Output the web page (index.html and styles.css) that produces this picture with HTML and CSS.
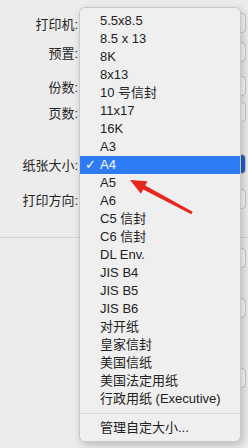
FILE: index.html
```html
<!DOCTYPE html>
<html>
  <head>
    <title>打印</title>
    <link rel="stylesheet" href="styles.css">
  </head>
  <body>
    <div class="dialog">
      <div class="row r1"><span class="label">打印机:</span><div class="control"></div></div>
      <div class="row r2"><span class="label">预置:</span><div class="control"></div></div>
      <div class="row r3"><span class="label">份数:</span><div class="control field"></div></div>
      <div class="row r4"><span class="label">页数:</span><div class="control field"></div></div>
      <div class="row r5"><span class="label">纸张大小:</span><div class="control popup"></div></div>
      <div class="row r6"><span class="label">打印方向:</span><div class="control field"></div></div>
      <div class="rule"></div>
      <div class="row r7"><span class="label"></span><div class="control field"></div></div>
      <div class="row r8"><span class="label"></span><div class="control field"></div></div>
      <div class="row r9"><span class="label"></span><div class="control field"></div></div>
    </div>

    <div class="menu">
      <div class="item"><span class="check"></span>5.5x8.5</div>
      <div class="item"><span class="check"></span>8.5 x 13</div>
      <div class="item"><span class="check"></span>8K</div>
      <div class="item"><span class="check"></span>8x13</div>
      <div class="item"><span class="check"></span>10 号信封</div>
      <div class="item"><span class="check"></span>11x17</div>
      <div class="item"><span class="check"></span>16K</div>
      <div class="item"><span class="check"></span>A3</div>
      <div class="item selected"><span class="check">✓</span>A4</div>
      <div class="item"><span class="check"></span>A5</div>
      <div class="item"><span class="check"></span>A6</div>
      <div class="item"><span class="check"></span>C5 信封</div>
      <div class="item"><span class="check"></span>C6 信封</div>
      <div class="item"><span class="check"></span>DL Env.</div>
      <div class="item"><span class="check"></span>JIS B4</div>
      <div class="item"><span class="check"></span>JIS B5</div>
      <div class="item"><span class="check"></span>JIS B6</div>
      <div class="item"><span class="check"></span>对开纸</div>
      <div class="item"><span class="check"></span>皇家信封</div>
      <div class="item"><span class="check"></span>美国信纸</div>
      <div class="item"><span class="check"></span>美国法定用纸</div>
      <div class="item"><span class="check"></span>行政用纸 (Executive)</div>
      <div class="separator"></div>
      <div class="item"><span class="check"></span>管理自定大小...</div>
    </div>

    <svg class="arrow" width="248" height="448" viewBox="0 0 248 448">
      <polygon points="130,180 147.5,181.3 145.2,185.6 192.7,211.7 191.3,214.3 143.2,189.4 140.9,193.7" fill="#e6261f"/>
    </svg>
  </body>
</html>
```

FILE: styles.css
```css
body {
  margin: 0;
  width: 248px;
  height: 448px;
  overflow: hidden;
  background-color: #ececec;
  font-family: "Liberation Sans", "Noto Sans CJK SC", sans-serif;
  font-size: 13px;
  color: #262626;
  position: relative;
}

.dialog {
  display: flex;
  flex-direction: column;
  padding-top: 13px;
}

.row {
  display: flex;
  align-items: center;
  height: 20px;
}

.row.r2 { margin-top: 9px; }
.row.r3 { margin-top: 14px; }
.row.r4 { margin-top: 6px; }
.row.r5 { margin-top: 32px; }
.row.r6 { margin-top: 15px; }
.row.r7 { margin-top: 10px; }
.row.r8 { margin-top: 30px; }
.row.r9 { margin-top: 50px; }

.label {
  width: 78px;
  text-align: right;
  white-space: nowrap;
}

.control {
  flex: 1;
  height: 18px;
  margin-left: 8px;
  margin-right: 2px;
  border: 1px solid #c6c6c6;
  border-radius: 4px;
  background-color: #f7f7f7;
}

.control.popup {
  background: linear-gradient(to right, #f7f7f7 0, #f7f7f7 150px, #1f5fd6 150px);
}

.rule {
  height: 1px;
  margin-top: 28px;
  background-color: #d2d2d2;
}

.menu {
  position: absolute;
  left: 79px;
  top: 7px;
  width: 160px;
  height: 424px;
  padding: 4px 0 5px 0;
  background-color: #efefef;
  border: 1px solid #c9c9c9;
  border-radius: 6px;
  box-shadow: 2px 3px 8px rgba(0, 0, 0, 0.22);
}

.item {
  display: flex;
  align-items: center;
  height: 18px;
  line-height: 18px;
  padding-left: 5px;
  white-space: nowrap;
  color: #222;
}

.item.selected {
  background-color: #2f7bf6;
  color: white;
}

.check {
  width: 15px;
  font-family: "DejaVu Sans", sans-serif;
  font-size: 13px;
}

.separator {
  height: 1px;
  margin: 5px 0;
  background-color: #dcdcdc;
}

.arrow {
  position: absolute;
  left: 0;
  top: 0;
  pointer-events: none;
}
```
